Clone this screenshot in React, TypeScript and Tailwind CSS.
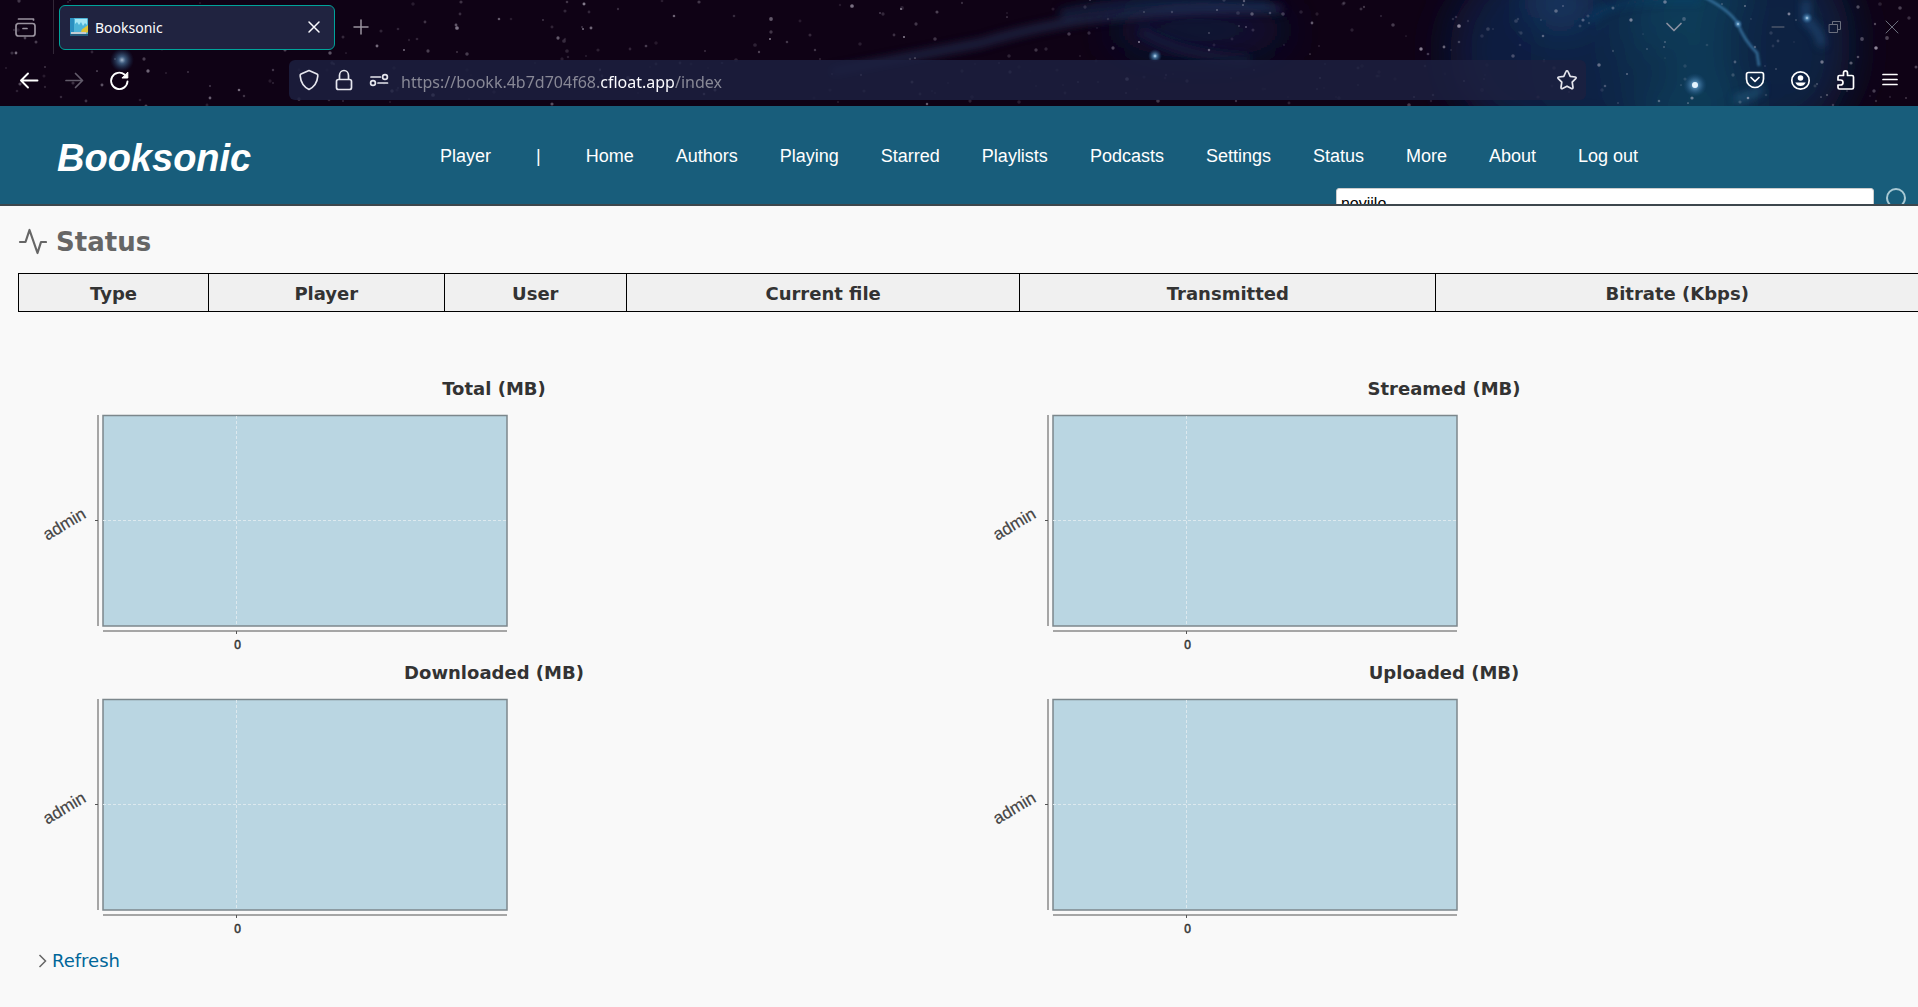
import type { ReactNode } from "react";

const navLinks = [
  "Home",
  "Authors",
  "Playing",
  "Starred",
  "Playlists",
  "Podcasts",
  "Settings",
  "Status",
  "More",
  "About",
  "Log out",
];

const columns = [
  { label: "Type", width: "w-[10%]" },
  { label: "Player", width: "w-[12.4%]" },
  { label: "User", width: "w-[9.6%]" },
  { label: "Current file", width: "w-[20.7%]" },
  { label: "Transmitted", width: "w-[21.9%]" },
  { label: "Bitrate (Kbps)", width: "w-[25.4%]" },
];

const charts = ["Total (MB)", "Streamed (MB)", "Downloaded (MB)", "Uploaded (MB)"];

function makeStars(count: number) {
  let seed = 20231;
  const next = () => {
    seed = (seed * 16807) % 2147483647;
    return seed / 2147483647;
  };
  return Array.from({ length: count }, () => ({
    x: Math.round(next() * 1918),
    y: Math.round(next() * 106),
    r: 0.8 + next() * 1.1,
    o: 0.12 + next() * next() * 0.6,
  }));
}

const stars = makeStars(380);

function NightSky() {
  return (
    <svg
      className="absolute inset-0 h-full w-full"
      viewBox="0 0 1918 106"
      preserveAspectRatio="xMaxYMin slice"
      aria-hidden="true"
    >
      <defs>
        <filter id="haze" x="-50%" y="-100%" width="200%" height="300%">
          <feGaussianBlur stdDeviation="22" />
        </filter>
        <filter id="soft" x="-20%" y="-50%" width="140%" height="200%">
          <feGaussianBlur stdDeviation="4" />
        </filter>
        <filter id="dot" x="-100%" y="-100%" width="300%" height="300%">
          <feGaussianBlur stdDeviation="1" />
        </filter>
        <radialGradient id="glow">
          <stop offset="0" stopColor="#cfeaff" />
          <stop offset="0.3" stopColor="#5f9ac8" stopOpacity="0.7" />
          <stop offset="1" stopColor="#1b5080" stopOpacity="0" />
        </radialGradient>
      </defs>
      <rect width="1918" height="106" fill="#0f0215" />
      <g filter="url(#haze)">
        <ellipse cx="1540" cy="50" rx="90" ry="90" fill="#101c40" />
        <ellipse cx="1610" cy="60" rx="80" ry="90" fill="#0c2045" />
        <ellipse cx="1700" cy="50" rx="75" ry="110" fill="#0d3a58" />
        <ellipse cx="1790" cy="45" rx="60" ry="90" fill="#0a2342" />
        <ellipse cx="1560" cy="0" rx="30" ry="22" fill="#1a3f6c" />
        <ellipse cx="1200" cy="30" rx="90" ry="28" fill="#0d1738" />
        <ellipse cx="1655" cy="70" rx="16" ry="26" fill="#0f1434" opacity="0.6" />
      </g>
      <g fill="none" filter="url(#soft)">
        <path d="M831 72Q903 58 981 43Q1050 22 1124 15T1282 9" stroke="#26375c" strokeWidth="7" opacity="0.75" />
        <path d="M1060 14Q1130 -4 1270 6" stroke="#1a3058" strokeWidth="10" opacity="0.55" />
        <path d="M1140 30Q1180 56 1250 60" stroke="#141f42" strokeWidth="12" opacity="0.5" />
        <path d="M1590 20Q1610 -4 1700 0" stroke="#1c4a78" strokeWidth="5" opacity="0.5" />
        <path d="M1806 0V20Q1820 30 1822 46" stroke="#285a8c" strokeWidth="6" opacity="0.7" />
        <path d="M1735 99Q1755 96 1762 88" stroke="#2d6d96" strokeWidth="5" opacity="0.7" />
      </g>
      <path
        d="M1702 -4Q1730 10 1738 24Q1744 40 1757 53L1759 66"
        fill="none"
        stroke="#3f7fae"
        strokeWidth="3"
        opacity="0.7"
        filter="url(#dot)"
      />
      <g fill="#cfc8d8">
        {stars.map((s, i) => (
          <circle key={i} cx={s.x} cy={s.y} r={s.r} opacity={s.o} />
        ))}
      </g>
      <circle cx="122" cy="60" r="12" fill="url(#glow)" opacity="0.8" />
      <circle cx="1695" cy="85" r="12" fill="url(#glow)" />
      <circle cx="1695" cy="85" r="3" fill="#e4f4ff" />
      <circle cx="1155" cy="56" r="7" fill="url(#glow)" />
      <circle cx="1807" cy="18" r="6" fill="url(#glow)" />
      <circle cx="1738" cy="24" r="5" fill="url(#glow)" />
    </svg>
  );
}

function Icon({ children }: { children: ReactNode }) {
  return (
    <svg
      className="size-6 shrink-0"
      viewBox="0 0 24 24"
      fill="none"
      stroke="currentColor"
      strokeWidth="1.7"
      strokeLinecap="round"
      strokeLinejoin="round"
      aria-hidden="true"
    >
      {children}
    </svg>
  );
}

function ToolButton({
  label,
  children,
  className = "text-white",
}: {
  label: string;
  children: ReactNode;
  className?: string;
}) {
  return (
    <button type="button" aria-label={label} className={`flex h-10 w-[45px] items-center justify-center ${className}`}>
      <Icon>{children}</Icon>
    </button>
  );
}

function TabStrip() {
  return (
    <div className="relative flex h-[54px] items-center">
      <button
        type="button"
        aria-label="Recent browsing"
        className="flex h-full w-[54px] items-center border-r border-white/15 pl-[13px] text-[#9a939f]"
      >
        <Icon>
          <path d="M5.500 4H20.500V5M4.500 8.500H19.500Q22 8.500 22 11V18.500Q22 21 19.500 21H5.500Q3 21 3 18.500V11Q3 8.500 5.500 8.500M10 13.500H14" />
        </Icon>
      </button>
      <div className="ml-[5px] flex h-[45px] w-[276px] items-center rounded-md border border-[#00a39a] bg-[#202340] pr-2 pl-2.5 text-[#fbfbfe]">
        <svg className="size-[18px]" viewBox="0 0 18 18" aria-hidden="true">
          <rect width="18" height="18" rx="1" fill="#4db4d8" />
          <rect width="4" height="16" fill="#2a8fc0" />
          <path d="M5 1H17V7L15 5L13 8L11 4L9 7L7 4L5 6Z" fill="#a5e6f5" />
          <path d="M11 15Q11 11 14 10L18 7V14L16 15Z" fill="#dfc437" />
          <rect x="1" y="14" width="15" height="2" fill="#c4ccd2" />
          <rect y="16" width="18" height="2" fill="#245c7c" />
        </svg>
        <span className="ml-[7px] flex-1 pt-[2px] font-['Noto_Sans',sans-serif] text-sm leading-5">Booksonic</span>
        <button type="button" aria-label="Close tab" className="flex items-center">
          <Icon>
            <path d="M7 7L17 17M17 7L7 17" strokeWidth="1.5" />
          </Icon>
        </button>
      </div>
      <button type="button" aria-label="New tab" className="ml-[14px] flex items-center text-[#9a939f]">
        <Icon>
          <path d="M12 5V19M5 12H19" strokeWidth="1.5" />
        </Icon>
      </button>
      <div className="ml-auto flex items-center pr-[14px] text-[#6b6f7d]">
        <button type="button" aria-label="List all tabs" className="mr-[80px] text-[#8b90a0]">
          <Icon>
            <path d="M5 8.500L12 15.500L19 8.500" />
          </Icon>
        </button>
        <div className="flex gap-[33px]">
          <button type="button" aria-label="Minimize">
            <Icon>
              <path d="M6 12H18" strokeWidth="1" />
            </Icon>
          </button>
          <button type="button" aria-label="Restore">
            <Icon>
              <path d="M6.500 9.500H14.500V17.500H6.500ZM9.500 9.500V6.500H17.500V14.500H14.500" strokeWidth="1" />
            </Icon>
          </button>
          <button type="button" aria-label="Close window">
            <Icon>
              <path d="M6 6L18 18M18 6L6 18" strokeWidth="1" />
            </Icon>
          </button>
        </div>
      </div>
    </div>
  );
}

function Toolbar() {
  return (
    <div className="relative flex h-[52px] items-center px-[6px]">
      <ToolButton label="Back">
        <path d="M20.500 12.500H4M11 5.500L4 12.500L11 19.500" strokeWidth="1.9" />
      </ToolButton>
      <ToolButton label="Forward" className="text-[#625b6a]">
        <path d="M4 12.500H20.500M13.500 5.500L20.500 12.500L13.500 19.500" />
      </ToolButton>
      <ToolButton label="Reload">
        <path d="M20.500 13.500A8.200 8.200 0 1 1 17.500 6.500" strokeWidth="1.9" />
        <path d="M20.800 4.500V10H15.300Z" fill="currentColor" strokeWidth="1" />
      </ToolButton>

      <div className="mr-[146px] ml-[148px] flex h-10 flex-1 items-center rounded-md bg-[#1c2040]/85 pr-[7px] pl-2 text-[#e6e6ee]">
        <button type="button" aria-label="Tracking protection" className="mr-[11px]">
          <Icon>
            <path d="M12 2.500L20 6Q21 6.500 20.800 8Q20 17.500 12 21.500Q4 17.500 3.200 8Q3 6.500 4 6Z" />
          </Icon>
        </button>
        <button type="button" aria-label="Connection secure" className="mr-[11px]">
          <Icon>
            <path d="M7.500 11.500V7.500A4.500 5 0 0 1 16.500 7.500V11.500M6.500 11.500H17.500Q19.500 11.500 19.500 13.500V19.500Q19.500 21.500 17.500 21.500H6.500Q4.500 21.500 4.500 19.500V13.500Q4.500 11.500 6.500 11.500Z" />
          </Icon>
        </button>
        <button type="button" aria-label="Permissions" className="mr-[10px]">
          <Icon>
            <path d="M4 9H13.500M11 15H20.500" />
            <circle cx="18" cy="9" r="2.400" />
            <circle cx="6" cy="15" r="2.400" />
          </Icon>
        </button>
        <p className="flex-1 pt-[3px] font-['Noto_Sans',sans-serif] text-base leading-6 text-[#888896]">
          https://bookk.4b7d704f68.<span className="text-[#fbfbfe]">cfloat.app</span>/index
        </p>
        <button type="button" aria-label="Bookmark this page">
          <Icon>
            <path d="M12 2.800Q12.700 2.800 13 3.500L15.200 8.300L20.300 9Q21.800 9.400 20.700 10.600L17.200 14.200L18 19.500Q18 21.200 16.500 20.600L12 18.200L7.500 20.600Q6 21.200 6 19.500L6.800 14.200L3.300 10.600Q2.200 9.400 3.700 9L8.800 8.300L11 3.500Q11.300 2.800 12 2.800Z" />
          </Icon>
        </button>
      </div>

      <ToolButton label="Save to Pocket">
        <path d="M5.500 4.500H18.500Q20.500 4.500 20.500 6.500V11A8.500 8.500 0 0 1 3.500 11V6.500Q3.500 4.500 5.500 4.500ZM8 9.500L12 13.300L16 9.500" />
      </ToolButton>
      <ToolButton label="Account">
        <circle cx="12.500" cy="12.500" r="8.700" />
        <circle cx="12.500" cy="10" r="2.800" fill="currentColor" stroke="none" />
        <path d="M7.300 14.500H17.700Q16 18 12.500 18T7.300 14.500Z" fill="currentColor" stroke="none" />
      </ToolButton>
      <ToolButton label="Extensions">
        <path d="M10.500 7V5Q10.500 2.800 12.500 2.800T14.500 5V7.500H19Q20.500 7.500 20.500 9V19.500Q20.500 21 19 21H6.500Q5 21 5 19.500V17H7.500Q10 17 10 14.500T7.500 12H5V9Q5 7.500 6.500 7.500H10.500Z" />
      </ToolButton>
      <ToolButton label="Menu">
        <path d="M5 6.500H19M5 11.500H19M5 16.500H19" />
      </ToolButton>
    </div>
  );
}

function AppHeader() {
  return (
    <header className="h-[100px] overflow-hidden border-b-2 border-[#3d474d] bg-[#185d7b] font-['Liberation_Sans',Arial,sans-serif] text-white">
      <div className="flex h-[82px] items-center pt-[18px]">
        <a href="#home" className="w-[440px] shrink-0 pt-1 pl-[57px] text-[38px] leading-none font-bold italic">
          Booksonic
        </a>
        <nav className="flex items-center gap-[42px] text-lg leading-6 whitespace-nowrap">
          <a href="#player">Player</a>
          <span className="px-[3px]">|</span>
          {navLinks.map((label) => (
            <a key={label} href={`#${label}`}>
              {label}
            </a>
          ))}
        </nav>
      </div>
      <form className="flex items-start justify-end gap-[10px] pr-[10px]">
        <input
          type="text"
          aria-label="Search"
          defaultValue="noviilo"
          className="h-[31px] w-[28.2%] rounded-[3px] border border-[#ccc] bg-white px-1 text-base text-black"
        />
        <button type="submit" aria-label="Run search" className="text-[#a9c9d4]">
          <svg className="size-6" viewBox="0 0 24 24" fill="none" stroke="currentColor" strokeWidth="2" aria-hidden="true">
            <circle cx="12" cy="10" r="9" />
            <path d="M18 17L23 23" />
          </svg>
        </button>
      </form>
    </header>
  );
}

function UsageChart({ title }: { title: string }) {
  return (
    <section>
      <h2 className="h-7 pt-px text-center text-lg leading-6 font-bold">{title}</h2>
      <svg className="h-64 w-[500px]" viewBox="0 0 500 256" role="img" aria-label={title}>
        <rect x="84" y="11.500" width="404" height="210.500" fill="#bad6e2" stroke="#7c878c" strokeWidth="1.500" />
        <path d="M79 11V222M84 227H488" stroke="#8b8b8b" strokeWidth="1.500" />
        <path d="M76 116.500H79M217.500 227V230" stroke="#555" />
        <path d="M84 116.500H488M217.500 12V222" stroke="#dde9ee" strokeDasharray="3 2" />
        <text
          x="68"
          y="113"
          textAnchor="end"
          transform="rotate(-31 68 113)"
          fill="#444"
          stroke="#444"
          strokeWidth="0.200"
          fontFamily="Liberation Sans, Arial, sans-serif"
          fontSize="17"
        >
          admin
        </text>
        <text
          x="218.500"
          y="245"
          textAnchor="middle"
          fill="#333"
          stroke="#333"
          strokeWidth="0.500"
          fontFamily="Liberation Sans, Arial, sans-serif"
          fontSize="12"
        >
          0
        </text>
      </svg>
    </section>
  );
}

export default function App() {
  return (
    <div className="flex min-h-screen flex-col overflow-hidden bg-[#f9f9f9]">
      <div className="relative bg-[#0f0215]">
        <NightSky />
        <TabStrip />
        <Toolbar />
      </div>
      <AppHeader />
      <main className="flex-1 pt-[18px] pl-[18px] font-['DejaVu_Sans',Verdana,sans-serif] text-[#333]">
        <h1 className="flex h-9 items-center gap-[9px] text-[26px] font-bold text-[#666]">
          <svg
            className="h-[34px] w-[29px]"
            viewBox="0 0 29 34"
            fill="none"
            stroke="currentColor"
            strokeWidth="2.200"
            strokeLinecap="round"
            strokeLinejoin="round"
            aria-hidden="true"
          >
            <path d="M2 17H7.500L11.500 5L19.500 28L23 17H28" />
          </svg>
          Status
        </h1>
        <table className="mt-[13px] -mr-px w-[calc(100%+1px)] table-fixed border-collapse">
          <thead>
            <tr>
              {columns.map((c) => (
                <th
                  key={c.label}
                  scope="col"
                  className={`h-[38px] border border-black bg-[#f0f0f0] pt-[2px] text-lg leading-6 font-bold ${c.width}`}
                >
                  {c.label}
                </th>
              ))}
            </tr>
          </thead>
        </table>
        <div className="mt-[64px] -mr-px grid grid-cols-2 pl-px">
          {charts.map((title) => (
            <UsageChart key={title} title={title} />
          ))}
        </div>
        <p className="mt-[5px] flex items-center pl-5 text-lg leading-6 text-[#006699]">
          <svg className="mr-[5px] h-4 w-[9px]" viewBox="0 0 9 16" fill="none" stroke="#666" strokeWidth="1.500" aria-hidden="true">
            <path d="M1.500 2L7.500 8L1.500 14" />
          </svg>
          <a href="#refresh">Refresh</a>
        </p>
      </main>
    </div>
  );
}
